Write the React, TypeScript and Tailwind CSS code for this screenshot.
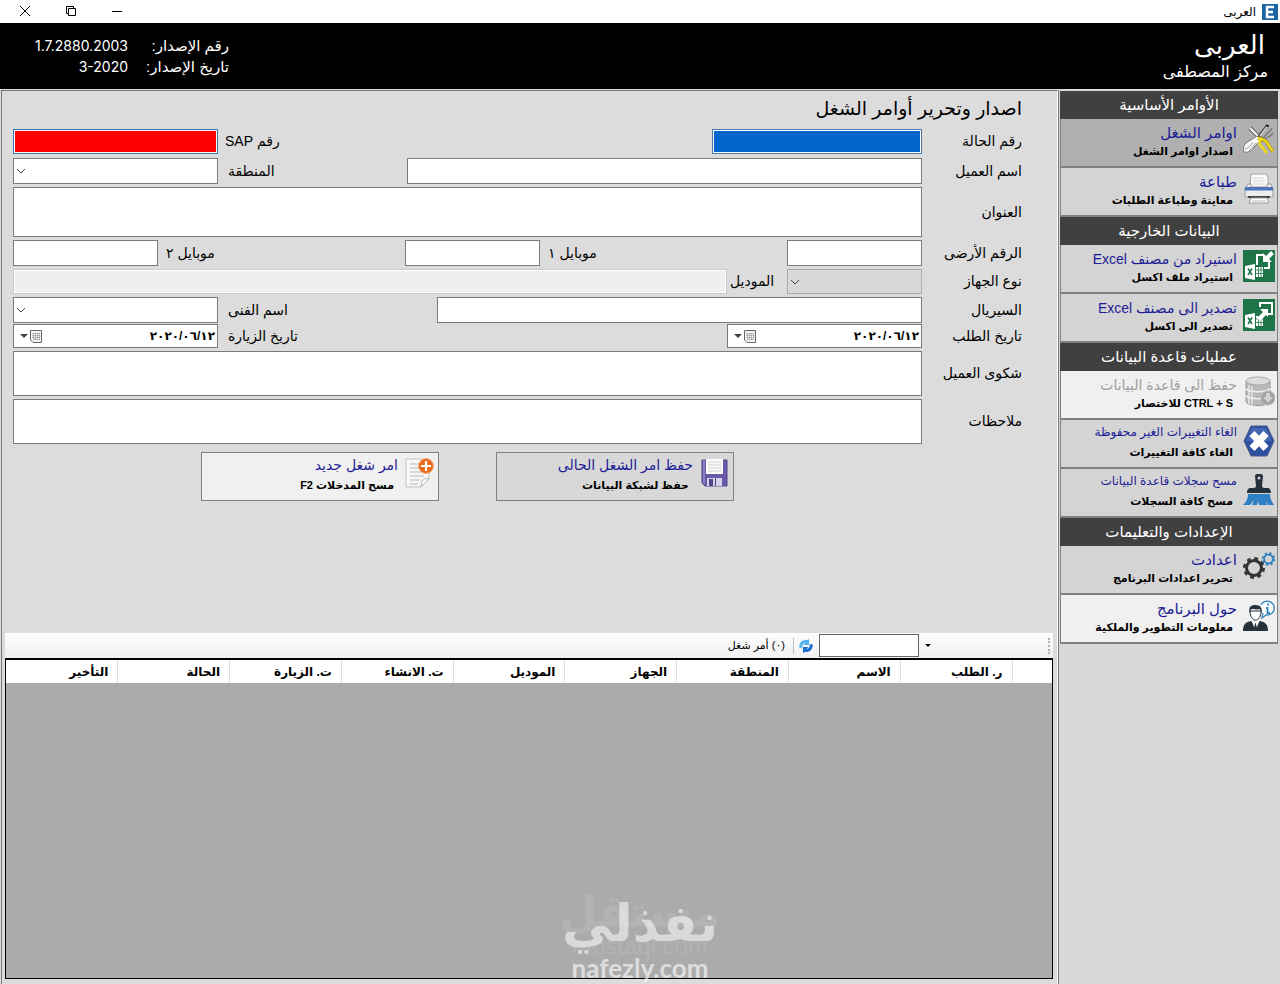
import { useState } from 'react'
import type { ReactNode } from 'react'

interface Command {
  title: string
  hint: string
  icon: ReactNode
  tone?: 'active' | 'light' | 'disabled'
  size?: 'sm' | 'md'
}

interface Section {
  heading: string
  commands: Command[]
}

function ToolsIcon() {
  return (
    <svg viewBox="0 0 32 32" className="size-8">
      <path d="M7 4 20 17" stroke="#555" strokeWidth="4" />
      <path d="M7 4 20 17" stroke="#f2f2f2" strokeWidth="2.4" />
      <path d="M25 1 17 11 14 17" stroke="#444" strokeWidth="3" fill="none" />
      <path d="M24 3 17 12" stroke="#ddd" strokeWidth="1.6" />
      <path d="M22 1h4l-1 2z" fill="#222" />
      <path d="M29 4c-2 4-6 6-9 10M30 9c-3 4-6 4-9 7" stroke="#777" strokeWidth="1.4" fill="none" />
      <path d="M14 12 3 19c-3 3-3 7-2 9 5 1 9-2 10-5l7-7z" fill="#f6f6f6" stroke="#777" />
      <path d="M2 25c3-1 6-3 8-7M6 27l7-8" stroke="#999" fill="none" />
      <path d="M15 14c5 1 8 2 10 6 1 3 3 5 5 7" stroke="#8a7a10" strokeWidth="3.6" fill="none" />
      <path d="M15 14c5 1 8 2 10 6 1 3 3 5 5 7" stroke="#f2d81c" strokeWidth="2.6" fill="none" />
      <path d="M18 14c-2 5-2 7 1 9 2 2 3 4 5 6" stroke="#f2d81c" strokeWidth="2.8" fill="none" />
    </svg>
  )
}

function PrinterIcon() {
  return (
    <svg viewBox="0 0 32 32" className="size-8">
      <path d="M8 1h15l2 3v11H7z" fill="#fafafa" stroke="#a5a5a5" />
      <path d="M10 5h11M10 8h12M10 11h12" stroke="#d0d0d0" />
      <path d="M5 11h3v3h16v-3h4l2 5v8H2v-8z" fill="#ececee" stroke="#999" />
      <path d="M2 14h28v3.500H2z" fill="#4d74b8" />
      <path d="M5 24h22" stroke="#444" strokeWidth="2" />
      <path d="M8 25h16l2 5H6z" fill="#fff" stroke="#999" />
      <path d="M9 28h14" stroke="#bbb" />
    </svg>
  )
}

function ExcelIcon({ out = false }: { out?: boolean }) {
  return (
    <svg viewBox="0 0 32 32" className="size-8">
      <path d="M0 0h32v32H0z" fill="#1e7446" />
      <path d="M2 16 12 14v16L2 28z" fill="#fff" />
      <path d="m5 18.500 4 6.500m0-6.500-4 6.500" stroke="#1e7446" strokeWidth="1.500" />
      <path d="M13 17h7v10h-7z" fill="#fff" />
      <path d="M13 20h7M13 23.500h7M15.500 17v10M18 17v10" stroke="#1e7446" strokeWidth=".8" />
      {out ? (
        <>
          <path d="M17 8V4h12v11h-5" fill="none" stroke="#fff" strokeWidth="2" />
          <path d="m14 19 6-6-3-3h8v8l-2-2-6 6z" fill="#fff" />
        </>
      ) : (
        <>
          <path d="M14 15V5h6M26 12v6h-5" fill="none" stroke="#fff" strokeWidth="2" />
          <path d="m28 1-5 5-3-3v9h9l-3-3 5-5z" fill="#fff" />
        </>
      )}
    </svg>
  )
}

function DatabaseIcon() {
  return (
    <svg viewBox="0 0 32 32" className="size-8">
      <path d="M3 5v20c0 6 24 6 24 0V5z" fill="#b9b9b9" stroke="#9a9a9a" />
      <path d="M6 9v19M9 10v19" stroke="#d8d8d8" strokeWidth="2" />
      <path d="M3 12c0 5 24 5 24 0M3 19c0 5 24 5 24 0" fill="none" stroke="#f0f0f0" strokeWidth="1.500" />
      <ellipse cx="15" cy="5" rx="12" ry="4" fill="#dcdcdc" stroke="#a8a8a8" />
      <circle cx="25" cy="22" r="7" fill="#a0a0a0" stroke="#b9b9b9" />
      <path d="M23 17h4v4h3l-5 6-5-6h3z" fill="#d2d2d2" />
    </svg>
  )
}

function CancelIcon() {
  return (
    <svg viewBox="0 0 32 32" className="size-8">
      <path d="M8 1h16l7 15-7 15H8L1 16z" fill="#2d4f9e" stroke="#4a5d8c" />
      <path d="M9 3h14l6 13H3z" fill="#4468b4" />
      <path d="m9 8.500 14 15M23 8.500l-14 15" stroke="#fff" strokeWidth="7" />
    </svg>
  )
}

function BrushIcon() {
  return (
    <svg viewBox="0 0 32 32" className="size-8">
      <path d="M12 2c0-3 8-3 8 0l-1 10c0 2 2 2 5 2 3 0 4 2 4 5H4c0-3 1-5 4-5 3 0 5 0 5-2z" fill="#25313d" />
      <circle cx="16" cy="4" r="1.500" fill="#d4d4d4" />
      <path d="M5 20h22c0 5 2 8 4 11h-6l-2-4 1 4h-8l-1-4-1 4h-5l2-5-4 5H0c3-3 5-6 5-11z" fill="#2f7fc4" />
    </svg>
  )
}

function GearsIcon() {
  return (
    <svg viewBox="0 0 32 32" className="size-8">
      <circle cx="11" cy="17" r="9.500" fill="none" stroke="#333" strokeWidth="3" strokeDasharray="3.730 3.730" />
      <circle cx="11" cy="17" r="7.500" fill="none" stroke="#333" strokeWidth="3" />
      <circle cx="25.500" cy="8" r="5.800" fill="none" stroke="#2f82bd" strokeWidth="2" strokeDasharray="2.280 2.280" />
      <circle cx="25.500" cy="8" r="4.400" fill="none" stroke="#2f82bd" strokeWidth="1.800" />
    </svg>
  )
}

function AboutIcon() {
  return (
    <svg viewBox="0 0 32 32" className="size-8">
      <path d="M18 5a7 7 0 1 1 5 10l-4 3 1-5" fill="#fff" stroke="#2f82bd" strokeWidth="1.300" />
      <path d="M25 5.500v-2M23 8h1.500v5H27" stroke="#2f82bd" strokeWidth="1.800" fill="none" />
      <path d="M7 11c0 6 3 9 5.500 9s5.500-3 5.500-9z" fill="#fff" stroke="#25313d" />
      <path d="M6.500 13c-1-6 1-8 6-8s7 3 6 8c-1-2-1-3-2-4-3 1-6 0-8 0-1 1-1 2-2 4z" fill="#25313d" />
      <path d="M0 31c0-7 3-9 8-10l4.500 4 4.500-4c5 1 8 3 8 10z" fill="#25313d" />
      <path d="m8.500 20.500 4 10.500 4-10.500-4 2.500z" fill="#fff" />
      <path d="m12.500 23.500-1 5 1 2 1-2z" fill="#25313d" stroke="#25313d" />
    </svg>
  )
}

function DiskIcon() {
  return (
    <svg viewBox="0 0 32 32" className="size-8">
      <path d="M3 3h25v26H6l-3-3z" fill="#6a58a8" stroke="#54448c" />
      <path d="M4 3h2v24H4z" fill="#8c7ec4" />
      <path d="M7 2h17v15H7z" fill="#fbfbfb" />
      <path d="M9 5h13M9 8h13M9 11h13M9 14h13" stroke="#cfcfcf" />
      <path d="M8 21h15v8H8z" fill="#d7d3e8" />
      <path d="M10 22h4v7h-4zM16 21h1v8h-1z" fill="#54448c" />
    </svg>
  )
}

function NewPageIcon() {
  return (
    <svg viewBox="0 0 32 32" className="size-8">
      <path d="M2 2h23v20l-8 8H2z" fill="#f7f7f7" stroke="#c2c2c2" />
      <path d="M6 7h10M6 11h11M6 15h15M6 19h14M6 23h10M6 27h8" stroke="#cdcdcd" strokeWidth="1.500" />
      <path d="M25 22c-3-1-5 0-6 1-2 2-1 4-2 7z" fill="#fff" stroke="#b0b0b0" />
      <circle cx="22" cy="9" r="7.500" fill="#ea6a1c" stroke="#f6b184" />
      <path d="M22 4v10M17 9h10" stroke="#fff" strokeWidth="2.200" />
    </svg>
  )
}

function RefreshIcon() {
  return (
    <svg viewBox="0 0 16 16" className="size-4">
      <path d="M1.500 10C.5 5 4 1.500 9 2l2-1v6H5.500l2-2C5 5.500 4 7 4.500 9.500z" fill="#4fb2ee" />
      <path d="M14.500 6c1 5-2.500 8.500-7.500 8l-2 1V9h5.500l-2 2c2.500-.5 3.500-2 3-4.500z" fill="#1a70cf" />
    </svg>
  )
}

function CalendarIcon() {
  return (
    <svg viewBox="0 0 12 13" className="h-[13px] w-3">
      <path d="M.5.5h11v12H3L.5 10z" fill="#f4f4f4" stroke="#666" />
      <path d="M2 3.500h8M2 5.500h8M2 7.500h8M3 9.500h7M3.500 3v7M5.500 3v7M7.500 3v7M9.500 3v7" stroke="#999" strokeWidth=".6" />
    </svg>
  )
}

const SECTIONS: Section[] = [
  {
    heading: 'الأوامر الأساسية',
    commands: [
      { title: 'اوامر الشغل', hint: 'اصدار اوامر الشغل', icon: <ToolsIcon />, tone: 'active' },
      { title: 'طباعة', hint: 'معاينة وطباعة الطلبات', icon: <PrinterIcon /> },
    ],
  },
  {
    heading: 'البيانات الخارجية',
    commands: [
      { title: 'استيراد من مصنف Excel', hint: 'استيراد ملف اكسل', icon: <ExcelIcon />, size: 'md' },
      { title: 'تصدير الى مصنف Excel', hint: 'تصدير الى اكسل', icon: <ExcelIcon out />, size: 'md' },
    ],
  },
  {
    heading: 'عمليات قاعدة البيانات',
    commands: [
      { title: 'حفظ الى قاعدة البيانات', hint: 'CTRL + S للاختصار', icon: <DatabaseIcon />, tone: 'disabled', size: 'md' },
      { title: 'الغاء التغييرات الغير محفوظة', hint: 'الغاء كافة التغييرات', icon: <CancelIcon />, size: 'sm' },
      { title: 'مسح سجلات قاعدة البيانات', hint: 'مسح كافة السجلات', icon: <BrushIcon />, size: 'sm' },
    ],
  },
  {
    heading: 'الإعدادات والتعليمات',
    commands: [
      { title: 'اعدادت', hint: 'تحرير اعدادات البرنامج', icon: <GearsIcon /> },
      { title: 'حول البرنامج', hint: 'معلومات التطوير والملكية', icon: <AboutIcon />, tone: 'light' },
    ],
  },
]

const COLUMNS = [
  'ر. الطلب', 'الاسم', 'المنطقة', 'الجهاز', 'الموديل',
  'ت. الانشاء', 'ت. الزيارة', 'الحالة', 'التأخير',
]

const FIELD = 'block min-w-0 border border-[#7a7a7a] bg-white px-1 text-sm outline-none'

const TONES = {
  active: 'bg-[#b0b0b0]',
  normal: 'bg-[#d4d4d4]',
  light: 'bg-[#f0f0f0]',
  disabled: 'bg-[#f0f0f0]',
}

const SIZES = {
  sm: 'text-[12px] leading-4 pb-1',
  md: 'text-[14px] leading-5',
  lg: 'text-[15px] leading-5',
}

function CommandButton({ command }: { command: Command }) {
  const { title, hint, icon, tone, size } = command
  return (
    <button
      type="button"
      disabled={tone === 'disabled'}
      className={`flex h-[49px] w-full items-start border-b-2 border-x border-[#808080] pr-0.5 pt-1 text-start ${TONES[tone ?? 'normal']}`}
    >
      <span className="mt-px shrink-0">{icon}</span>
      <span className="min-w-0 pr-1.5">
        <span
          className={`block whitespace-nowrap ${SIZES[size ?? 'lg']} ${
            tone === 'disabled' ? 'text-[#a0a0a0]' : 'text-[#1c1c96]'
          }`}
        >
          {title}
        </span>
        <span className="block whitespace-nowrap pr-1 text-[11px] font-bold leading-4 text-black">{hint}</span>
      </span>
    </button>
  )
}

function RowLabel({ htmlFor, children }: { htmlFor: string; children: ReactNode }) {
  return (
    <label htmlFor={htmlFor} className="w-[100px] shrink-0 self-center whitespace-nowrap text-[14px]">
      {children}
    </label>
  )
}

// label that hugs the field on its left
function SideLabel({ htmlFor, className, children }: { htmlFor: string; className: string; children: ReactNode }) {
  return (
    <label htmlFor={htmlFor} className={`self-center whitespace-nowrap text-left text-[14px] ${className}`}>
      {children}
    </label>
  )
}

function Combo({ id, className, disabled }: { id: string; className: string; disabled?: boolean }) {
  return (
    <div className={`relative shrink-0 ${className}`}>
      <select
        id={id}
        disabled={disabled}
        className={`block size-full appearance-none border px-2 outline-none ${
          disabled ? 'border-[#adadad] bg-[#d8d8d8]' : 'border-[#7a7a7a] bg-white'
        }`}
      >
        <option value="" />
      </select>
      <svg viewBox="0 0 10 6" className="pointer-events-none absolute left-[3px] top-2.5 h-1.5 w-2.5" fill="none" stroke="#444">
        <path d="m1 1 4 4 4-4" />
      </svg>
    </div>
  )
}

function DateField({ id, className }: { id: string; className: string }) {
  const [value, setValue] = useState('٢٠٢٠/٠٦/١٢')
  return (
    <div className={`flex h-6 shrink-0 items-center border border-[#7a7a7a] bg-white ${className}`}>
      <input
        id={id}
        value={value}
        onChange={e => setValue(e.target.value)}
        className="min-w-0 flex-1 px-0.5 text-xs font-bold outline-none"
      />
      <button type="button" aria-label="التقويم" className="flex items-center gap-0.5 pl-1.5">
        <CalendarIcon />
        <svg viewBox="0 0 8 4" className="h-1 w-2"><path d="M0 0h8L4 4z" fill="#444" /></svg>
      </button>
    </div>
  )
}

function ActionButton({ title, hint, icon, className }: { title: string; hint: string; icon: ReactNode; className: string }) {
  return (
    <button type="button" className={`flex h-[49px] w-[238px] items-start border border-[#808080] pr-0.5 pt-1 text-start ${className}`}>
      {icon}
      <span className="pr-1.5">
        <span className="block text-[14px] leading-4 text-[#1c1c96]">{title}</span>
        <span className="block pr-1 pt-1 text-[11px] font-bold leading-4">{hint}</span>
      </span>
    </button>
  )
}

function TitleBar() {
  return (
    <div className="flex h-[23px] items-center bg-white pl-[18px] pr-[2px]">
      <svg viewBox="0 0 16 16" className="size-4">
        <path d="M0 0h16v16H0z" fill="#1d64a5" />
        <path d="M12 3H5v10h7M5 8h6" fill="none" stroke="#fff" strokeWidth="2.400" />
      </svg>
      <span className="flex-1 pr-1.5 text-[12px]">العربى</span>
      <div className="flex gap-8 pb-0.5">
        <button type="button" aria-label="تصغير">
          <svg viewBox="0 0 14 14" className="size-3.5" stroke="#000"><path d="M2 7.500h10" /></svg>
        </button>
        <button type="button" aria-label="تكبير">
          <svg viewBox="0 0 14 14" className="size-3.5" fill="none" stroke="#000">
            <path d="M4.500 4.500h7v7h-7zM4 9.500H2.500v-7h7V4" />
          </svg>
        </button>
        <button type="button" aria-label="إغلاق">
          <svg viewBox="0 0 14 14" className="size-3.5" stroke="#000"><path d="m2 2 10 10M12 2 2 12" /></svg>
        </button>
      </div>
    </div>
  )
}

function Header() {
  return (
    <header className="flex h-[66px] justify-between bg-black pl-[18px] pr-3 text-white">
      <div className="pt-1">
        <div className="pr-[3px] text-[26px] leading-9">العربى</div>
        <div className="text-[16px] leading-[18px]">مركز المصطفى</div>
      </div>
      <dl className="grid grid-cols-[101px_110px] content-start pt-3 text-[15px] leading-[21px]">
        <dt>رقم الإصدار:</dt>
        <dd dir="ltr" className="text-right font-[Inter,sans-serif] text-[14px]">1.7.2880.2003</dd>
        <dt>تاريخ الإصدار:</dt>
        <dd dir="ltr" className="text-right font-[Inter,sans-serif] text-[14px]">3-2020</dd>
      </dl>
    </header>
  )
}

function OrderForm() {
  return (
    <form className="min-h-[542px] pl-[11px] pr-[35px]">
      <h1 className="h-[38px] pt-1 text-[19px] leading-7">اصدار وتحرير أوامر الشغل</h1>
      <div className="flex flex-col gap-[3px]">
        <div className="flex justify-between pb-px">
          <div className="flex">
            <RowLabel htmlFor="case">رقم الحالة</RowLabel>
            <input id="case" className="h-[25px] w-[210px] border border-[#4a7ba8] bg-[#0465cf] px-1 outline-none ring-1 ring-inset ring-white" />
          </div>
          <div className="flex">
            <SideLabel htmlFor="sap" className="pl-[7px]">رقم SAP</SideLabel>
            <input id="sap" className="h-[25px] w-[205px] border border-[#3a78b8] bg-[#fe0000] px-1 outline-none ring-1 ring-inset ring-white" />
          </div>
        </div>
        <div className="flex">
          <RowLabel htmlFor="client">اسم العميل</RowLabel>
          <input id="client" className={`${FIELD} h-[26px] flex-1`} />
          <SideLabel htmlFor="area" className="w-[189px] pl-2.5">المنطقة</SideLabel>
          <Combo id="area" className="h-[26px] w-[205px]" />
        </div>
        <div className="flex">
          <RowLabel htmlFor="address">العنوان</RowLabel>
          <textarea id="address" className={`${FIELD} h-[50px] flex-1 resize-none`} />
        </div>
        <div className="flex">
          <RowLabel htmlFor="landline">الرقم الأرضى</RowLabel>
          <input id="landline" className={`${FIELD} h-[26px] w-[135px]`} />
          <SideLabel htmlFor="mobile1" className="flex-1 pl-2">موبايل ١</SideLabel>
          <input id="mobile1" className={`${FIELD} h-[26px] w-[135px]`} />
          <SideLabel htmlFor="mobile2" className="flex-1 pl-2">موبايل ٢</SideLabel>
          <input id="mobile2" className={`${FIELD} h-[26px] w-[145px]`} />
        </div>
        <div className="flex">
          <RowLabel htmlFor="device">نوع الجهاز</RowLabel>
          <Combo id="device" className="h-[25px] w-[135px]" disabled />
          <SideLabel htmlFor="model" className="w-[60px] pl-[3px]">الموديل</SideLabel>
          <input id="model" disabled className="h-[25px] min-w-0 flex-1 border border-[#cccccc] bg-[#efefef] px-1 ring-1 ring-inset ring-white" />
        </div>
        <div className="flex">
          <RowLabel htmlFor="serial">السيريال</RowLabel>
          <input id="serial" className={`${FIELD} h-[26px] flex-1`} />
          <SideLabel htmlFor="technician" className="w-[219px] pl-2.5">اسم الفنى</SideLabel>
          <Combo id="technician" className="h-[26px] w-[205px]" />
        </div>
        <div className="-mt-0.5 flex">
          <RowLabel htmlFor="orderDate">تاريخ الطلب</RowLabel>
          <DateField id="orderDate" className="w-[195px]" />
          <SideLabel htmlFor="visitDate" className="flex-1 pl-2.5">تاريخ الزيارة</SideLabel>
          <DateField id="visitDate" className="w-[205px]" />
        </div>
        <div className="flex">
          <RowLabel htmlFor="complaint">شكوى العميل</RowLabel>
          <textarea id="complaint" className={`${FIELD} h-[45px] flex-1 resize-none`} />
        </div>
        <div className="flex">
          <RowLabel htmlFor="notes">ملاحظات</RowLabel>
          <textarea id="notes" className={`${FIELD} h-[45px] flex-1 resize-none`} />
        </div>
      </div>
      <div className="mr-[100px] flex justify-center gap-[57px] pt-2">
        <ActionButton title="حفظ امر الشغل الحالى" hint="حفظ لشبكة البيانات" icon={<DiskIcon />} className="bg-[#d8d8d8]" />
        <ActionButton title="امر شغل جديد" hint="مسح المدخلات F2" icon={<NewPageIcon />} className="bg-[#f0f0f0]" />
      </div>
    </form>
  )
}

function OrdersGrid() {
  return (
    <section className="flex flex-1 flex-col pb-[3px] pl-[3px] pr-1">
      <div className="flex h-[25px] items-center bg-linear-to-b from-[#fdfdfd] to-[#f1f1f1] pr-[3px]">
        <span className="h-4 border-r-2 border-dotted border-[#b0b0b0]" />
        <button type="button" aria-label="خيارات البحث" className="mr-[115px] p-0.5">
          <svg viewBox="0 0 6 3" className="h-[3px] w-1.5"><path d="M0 0h6L3 3z" /></svg>
        </button>
        <input aria-label="بحث" className="mr-1 h-[23px] w-[100px] border border-[#646464] bg-white px-1 text-xs outline-none" />
        <button type="button" aria-label="تحديث" className="mr-[5px]"><RefreshIcon /></button>
        <span className="mx-1 h-4 border-r border-[#bdbdbd]" />
        <span className="px-1 text-[11px]">(٠) أمر شغل</span>
      </div>
      <div className="flex-1 border border-t-2 border-black bg-[#ababab]">
        <table className="w-full table-fixed border-collapse bg-white">
          <thead>
            <tr className="h-[23px]">
              <td className="w-10" />
              {COLUMNS.map(name => (
                <th key={name} scope="col" className="border-r border-[#dedede] px-[9px] py-0 text-start text-[12px] font-bold leading-4">
                  {name}
                </th>
              ))}
            </tr>
          </thead>
        </table>
      </div>
    </section>
  )
}

function Watermark() {
  return (
    <div className="pointer-events-none absolute inset-x-0 bottom-0 flex h-24 flex-col items-center justify-end text-white">
      <div className="absolute inset-x-0 top-0 text-center opacity-10">
        <div className="text-[44px] font-bold leading-[48px]">مستقل</div>
        <div className="text-[24px] leading-5">mostaql.com</div>
      </div>
      <div className="text-[51px] font-bold leading-[56px] opacity-55">نفذلي</div>
      <div className="font-[Lato,sans-serif] text-[26px] font-bold leading-8 opacity-60">nafezly.com</div>
    </div>
  )
}

export default function App() {
  return (
    <div
      dir="rtl"
      className="relative flex min-h-screen flex-col bg-[#dcdcdc] font-['Liberation_Sans','DejaVu_Sans',sans-serif] text-black"
    >
      <TitleBar />
      <Header />
      <div className="flex flex-1 pl-px pt-px">
        <nav className="w-[222px] shrink-0 border-l border-[#787878] bg-[#d8d8d8] pl-px pr-[2px] pt-px">
          {SECTIONS.map(section => (
            <section key={section.heading}>
              <h2 className="h-7 bg-[#404040] text-center text-[15px] leading-7 text-white">{section.heading}</h2>
              {section.commands.map(command => (
                <CommandButton key={command.title} command={command} />
              ))}
            </section>
          ))}
        </nav>
        <main className="flex min-w-0 flex-1 flex-col border-x border-t border-[#787878] border-r-white pb-0.5">
          <OrderForm />
          <OrdersGrid />
        </main>
      </div>
      <Watermark />
    </div>
  )
}
